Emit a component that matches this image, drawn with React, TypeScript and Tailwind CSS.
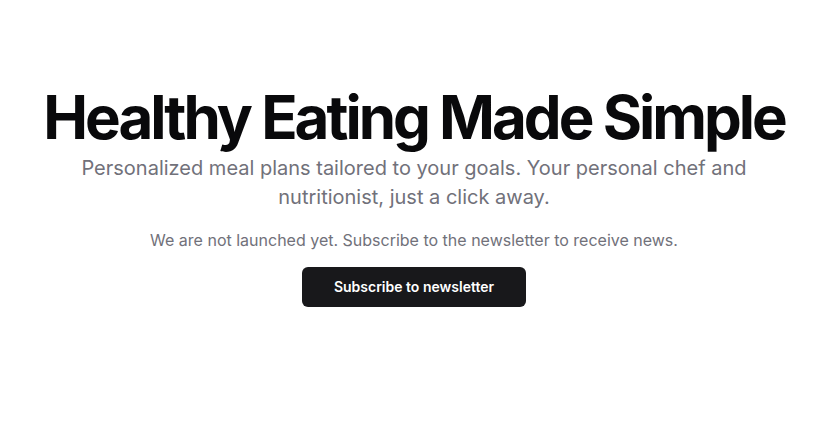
export default function App() {
  return (
    <main
      className="flex min-h-screen flex-col items-center bg-white pl-[30px] pr-4 pt-[87px] text-center"
      style={{ fontFamily: "Inter, 'Noto Sans', sans-serif" }}
    >
      <h1 className="text-[60px] font-bold leading-none tracking-tighter text-[#09090b]">
        Healthy Eating Made Simple
      </h1>
      <p className="mt-[7px] max-w-3xl text-xl leading-[29px] text-[#71717a]">
        Personalized meal plans tailored to your goals. Your personal chef and nutritionist, just a
        click away.
      </p>
      <p className="mt-4 text-base text-[#71717a]">
        We are not launched yet. Subscribe to the newsletter to receive news.
      </p>
      <button className="mt-[15px] h-10 rounded-md bg-[#18181b] px-8 text-sm font-semibold text-white">
        Subscribe to newsletter
      </button>
    </main>
  );
}
